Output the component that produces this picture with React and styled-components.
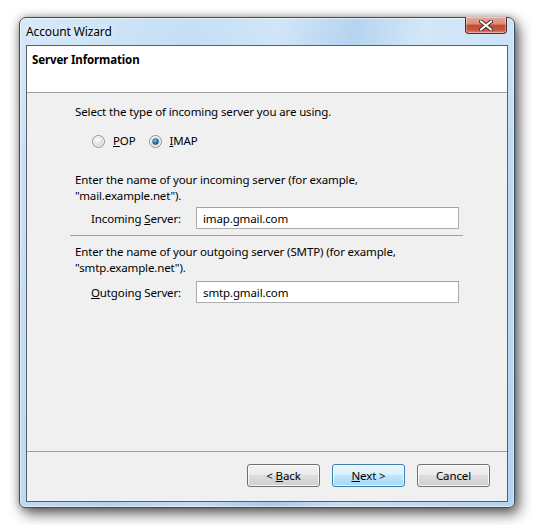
import React from 'react'
import styled, { createGlobalStyle } from 'styled-components'

const GlobalStyle = createGlobalStyle`
  html, body {
    margin: 0;
    padding: 0;
    background: #ffffff;
  }
  body {
    font-family: "Noto Sans", "Liberation Sans", sans-serif;
    font-size: 11.5px;
    letter-spacing: -0.13px;
    color: #000;
  }
`

function Radio({ checked }) {
  return (
    <svg width="13" height="13" viewBox="0 0 13 13">
      <defs>
        <radialGradient id={checked ? 'rbOn' : 'rbOff'} cx="0.4" cy="0.35" r="0.7">
          <stop offset="0" stopColor="#ffffff" />
          <stop offset="1" stopColor="#d4d4d4" />
        </radialGradient>
        <radialGradient id="dot" cx="0.4" cy="0.35" r="0.7">
          <stop offset="0" stopColor="#7fd3f7" />
          <stop offset="0.6" stopColor="#1b76b3" />
          <stop offset="1" stopColor="#0c4a7a" />
        </radialGradient>
      </defs>
      <circle cx="6.5" cy="6.5" r="6" fill="#f4f4f4" stroke="#8e8f8f" strokeWidth="1" />
      <circle cx="6.5" cy="6.5" r="4.5" fill={`url(#${checked ? 'rbOn' : 'rbOff'})`} />
      {checked && <circle cx="6.5" cy="6.5" r="3" fill="url(#dot)" stroke="#1d4e75" strokeWidth="0.5" />}
    </svg>
  )
}

function App() {
  return (
    <>
      <GlobalStyle />
      <Desktop>
        <Window>
          <TitleBar>
            <Caption>Account Wizard</Caption>
            <CloseButton>
              <svg width="14" height="11" viewBox="0 0 14 11">
                <path d="M2 1.5 L12 9.5 M12 1.5 L2 9.5" stroke="#4b2a24" strokeWidth="4" strokeLinecap="round" />
                <path d="M2 1.5 L12 9.5 M12 1.5 L2 9.5" stroke="#ffffff" strokeWidth="2.2" strokeLinecap="round" />
              </svg>
            </CloseButton>
          </TitleBar>
          <Client>
            <Header>
              <HeaderTitle>Server Information</HeaderTitle>
            </Header>
            <Body>
              <Group>
                <Prompt>Select the type of incoming server you are using.</Prompt>
                <RadioRow>
                  <RadioOption>
                    <Radio />
                    <span><u>P</u>OP</span>
                  </RadioOption>
                  <RadioOption>
                    <Radio checked />
                    <span><u>I</u>MAP</span>
                  </RadioOption>
                </RadioRow>
                <Prompt $top={23}>
                  Enter the name of your incoming server (for example,<br />
                  "mail.example.net").
                </Prompt>
                <FieldRow $top={3}>
                  <Label>Incoming <u>S</u>erver:</Label>
                  <TextBox>imap.gmail.com</TextBox>
                </FieldRow>
                <Rule />
                <Prompt $top={8}>
                  Enter the name of your outgoing server (SMTP) (for example,<br />
                  "smtp.example.net").
                </Prompt>
                <FieldRow $top={5}>
                  <Label><u>O</u>utgoing Server:</Label>
                  <TextBox>smtp.gmail.com</TextBox>
                </FieldRow>
              </Group>
            </Body>
            <Footer>
              <Button><span>&lt; <u>B</u>ack</span></Button>
              <Button $default><span><u>N</u>ext &gt;</span></Button>
              <Button>Cancel</Button>
            </Footer>
          </Client>
        </Window>
      </Desktop>
    </>
  )
}

export default App

const Desktop = styled.div`
  width: 535px;
  height: 525px;
  padding: 17px 0 0 19px;
  box-sizing: border-box;
`

const Window = styled.div`
  width: 496px;
  height: 491px;
  box-sizing: border-box;
  display: flex;
  flex-direction: column;
  border: 1px solid #3b4b5c;
  border-radius: 7px 7px 6px 6px;
  background:
    linear-gradient(100deg, rgba(255,255,255,0.3) 0%, rgba(255,255,255,0) 30%, rgba(255,255,255,0.2) 45%, rgba(110,160,215,0.18) 58%, rgba(255,255,255,0.25) 70%, rgba(255,255,255,0) 100%),
    linear-gradient(180deg, #c6e0f6 0%, #b8d6f2 30%, #b4d3f1 100%);
  box-shadow:
    inset 0 0 0 1px rgba(255,255,255,0.55),
    4px 6px 14px rgba(0,0,0,0.6),
    0 0 8px rgba(0,0,0,0.3);
`

const TitleBar = styled.div`
  height: 27px;
  display: flex;
  justify-content: space-between;
  align-items: flex-start;
  padding: 0 7px 0 6px;
  flex: none;
`

const Caption = styled.div`
  font-size: 12px;
  line-height: 16px;
  padding-top: 6px;
  color: #000;
  text-shadow: 0 0 6px rgba(255,255,255,0.9);
`

const CloseButton = styled.div`
  width: 42px;
  height: 17px;
  margin-top: -1px;
  box-sizing: border-box;
  border: 1px solid #5a2a22;
  border-top: none;
  border-radius: 0 0 4px 4px;
  display: flex;
  align-items: center;
  justify-content: center;
  background: linear-gradient(180deg, #e9a797 0%, #dc8b78 45%, #c04a33 50%, #c9563c 80%, #e08a6f 100%);
  box-shadow: inset 0 0 0 1px rgba(255,255,255,0.35);
`

const Client = styled.div`
  flex: 1;
  margin: 0 6px 5px 6px;
  display: flex;
  flex-direction: column;
  border: 1px solid #55606b;
  background: #f0f0f0;
`

const Header = styled.div`
  height: 47px;
  flex: none;
  background: #ffffff;
  border-bottom: 1px solid #a0a0a0;
  padding: 6px 0 0 5px;
  box-sizing: border-box;
`

const HeaderTitle = styled.div`
  font-weight: bold;
  font-size: 11.5px;
  line-height: 16px;
`

const Body = styled.div`
  flex: 1;
  padding: 11px 0 0 43px;
`

const Group = styled.div`
  width: 393px;
  display: flex;
  flex-direction: column;
`

const Prompt = styled.div`
  margin-top: ${p => p.$top || 0}px;
  padding-left: 5px;
  line-height: 16px;
`

const RadioRow = styled.div`
  margin-top: 13px;
  padding-left: 22px;
  display: flex;
  gap: 13px;
  line-height: 16px;
`

const RadioOption = styled.label`
  display: flex;
  align-items: center;
  gap: 8px;
`

const FieldRow = styled.div`
  margin-top: ${p => p.$top || 0}px;
  display: flex;
  align-items: center;
  padding-left: 21px;
`

const Label = styled.div`
  width: 105px;
`

const TextBox = styled.div`
  width: 263px;
  height: 22px;
  box-sizing: border-box;
  border: 1px solid #abadb3;
  border-top-color: #a1a3a8;
  background: #fff;
  padding: 0 6px;
  display: flex;
  align-items: center;
`

const Rule = styled.div`
  margin-top: 6px;
  height: 1px;
  background: #a0a0a0;
`

const Footer = styled.div`
  height: 50px;
  flex: none;
  border-top: 1px solid #a0a0a0;
  box-sizing: border-box;
  display: flex;
  justify-content: flex-end;
  align-items: flex-start;
  gap: 12px;
  padding: 12px 17px 0 0;
`

const Button = styled.div`
  width: 73px;
  height: 23px;
  box-sizing: border-box;
  border: 1px solid ${p => (p.$default ? '#3c7fb1' : '#707070')};
  border-radius: 3px;
  display: flex;
  align-items: center;
  justify-content: center;
  background: ${p => (p.$default
    ? 'linear-gradient(180deg, #eaf6fd 0%, #d9f0fc 48%, #bee6fd 50%, #a7d9f5 100%)'
    : 'linear-gradient(180deg, #f2f2f2 0%, #ebebeb 48%, #dddddd 50%, #cfcfcf 100%)')};
  box-shadow: inset 0 0 0 1px ${p => (p.$default ? 'rgba(255,255,255,0.7)' : 'rgba(255,255,255,0.8)')};
`
